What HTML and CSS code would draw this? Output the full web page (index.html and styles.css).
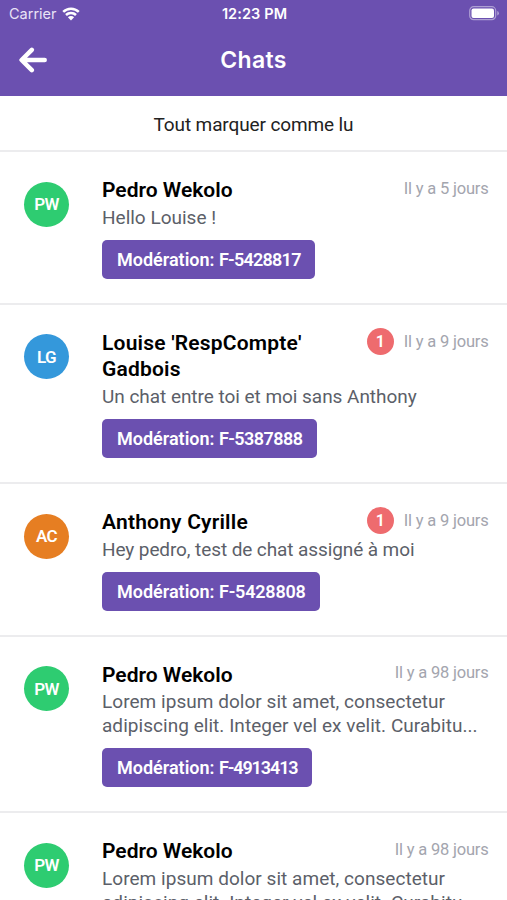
FILE: index.html
```html
<!DOCTYPE html>
<html lang="fr">
<head>
<meta charset="utf-8">
<title>Chats</title>
<link rel="stylesheet" href="styles.css">
</head>
<body>
<header class="header">
  <div class="status">
    <div class="carrier"><span>Carrier</span>
      <svg class="wifi" viewBox="0 0 18 14" width="18" height="14"><path d="M1.2 4.9a11.2 11.2 0 0 1 15.6 0M4 8a7.1 7.1 0 0 1 10 0" fill="none" stroke="#fff" stroke-width="2.5"/><path d="M9 13.4 5.9 10.2a4.4 4.4 0 0 1 6.2 0z" fill="#fff"/></svg>
    </div>
    <span class="clock">12:23 PM</span>
    <svg class="battery" viewBox="0 0 31 15" width="31" height="15"><rect x=".7" y=".7" width="26" height="13" rx="4" fill="none" stroke="#fff" stroke-opacity=".45" stroke-width="1.2"/><rect x="2.5" y="2.5" width="22.5" height="9.5" rx="2" fill="#fff"/><path d="M28.3 5v4.5q1.5-.5 1.5-2.2T28.3 5z" fill="#fff" fill-opacity=".5"/></svg>
  </div>
  <div class="nav">
    <svg class="back" viewBox="0 0 28 26" width="28" height="26"><path d="M12.8 2.8 2.6 13l10.2 10.2M3.2 13h22.5" fill="none" stroke="#fff" stroke-width="4.5" stroke-linecap="round" stroke-linejoin="round"/></svg>
    <h1 class="title">Chats</h1>
  </div>
</header>
<div class="mark-all"><span>Tout marquer comme lu</span></div>
<main class="list">
  <article class="chat">
    <div class="avatar green">PW</div>
    <div class="body">
      <div class="top"><h2 class="name">Pedro Wekolo</h2><div class="meta"><time>Il y a 5 jours</time></div></div>
      <p class="message">Hello Louise !</p>
      <span class="tag t1">Modération: <span class="ref">F-5428817</span></span>
    </div>
  </article>
  <article class="chat">
    <div class="avatar blue">LG</div>
    <div class="body">
      <div class="top"><h2 class="name wide">Louise 'RespCompte' Gadbois</h2><div class="meta unread"><span class="count">1</span><time>Il y a 9 jours</time></div></div>
      <p class="message snug">Un chat entre toi et moi sans Anthony</p>
      <span class="tag t2">Modération: <span class="ref">F-5387888</span></span>
    </div>
  </article>
  <article class="chat">
    <div class="avatar orange">AC</div>
    <div class="body">
      <div class="top"><h2 class="name wide">Anthony Cyrille</h2><div class="meta unread"><span class="count">1</span><time>Il y a 9 jours</time></div></div>
      <p class="message tight">Hey pedro, test de chat assigné à moi</p>
      <span class="tag t3">Modération: <span class="ref">F-5428808</span></span>
    </div>
  </article>
  <article class="chat">
    <div class="avatar green">PW</div>
    <div class="body">
      <div class="top"><h2 class="name">Pedro Wekolo</h2><div class="meta"><time>Il y a 98 jours</time></div></div>
      <p class="message loose">Lorem ipsum dolor sit amet, consectetur<br>adipiscing elit. Integer vel ex velit. Curabitu...</p>
      <span class="tag t4">Modération: <span class="ref">F-4913413</span></span>
    </div>
  </article>
  <article class="chat">
    <div class="avatar green">PW</div>
    <div class="body">
      <div class="top"><h2 class="name">Pedro Wekolo</h2><div class="meta"><time>Il y a 98 jours</time></div></div>
      <p class="message loose">Lorem ipsum dolor sit amet, consectetur<br>adipiscing elit. Integer vel ex velit. Curabitu...</p>
    </div>
  </article>
</main>
</body>
</html>
```
FILE: styles.css
```css
* { box-sizing: border-box; }
html, body { height: 900px; overflow: hidden; }
body { margin: 0; background: #fff; color: #000; font-family: Roboto, "Liberation Sans", sans-serif; }
h1, h2, p { margin: 0; }
svg { display: block; }
.header { height: 96px; background: #6b50b0; color: #fff; font-family: Inter, sans-serif; }
.status { height: 27px; display: grid; grid-template-columns: 1fr auto 1fr; align-items: center; padding: 0 7px 0 9px; }
.carrier { display: flex; align-items: center; gap: 5px; font-size: 14.5px; color: #e9e3f6; }
.clock { font-size: 14.5px; font-weight: 600; letter-spacing: .1px; }
.battery { justify-self: end; }
.nav { height: 66px; display: grid; grid-template-columns: 1fr auto 1fr; align-items: center; padding: 0 19px; }
.title { font-size: 23px; font-weight: 600; letter-spacing: .3px; }
.mark-all { height: 56px; padding-top: 2.5px; border-bottom: 2px solid #ececee; display: flex; align-items: center; justify-content: center; font-size: 19px; color: #222; letter-spacing: -.12px; }
.chat { display: flex; padding: 25px 18.5px 24.1px 24px; border-bottom: 2px solid #ececee; }
.avatar { flex: none; width: 45px; height: 45px; margin: 4.7px 33px 0 0; border-radius: 50%; color: #fff; font-size: 17px; letter-spacing: -.6px; font-weight: 600; display: flex; align-items: center; justify-content: center; }
.green { background: #2ecc71; }
.blue { background: #3498db; }
.orange { background: #e67e22; }
.body { flex: 1; min-width: 0; }
.top { display: flex; justify-content: space-between; align-items: flex-start; }
.name { max-width: 240px; font-size: 21px; line-height: 26.6px; font-weight: 600; }
.wide { letter-spacing: .2px; }
.meta { height: 22px; display: flex; align-items: center; gap: 10px; flex: none; }
.unread { height: 23px; }
time { font-size: 16.5px; color: #a3a5ae; white-space: nowrap; letter-spacing: -.2px; }
.count { width: 27px; height: 27px; border-radius: 50%; background: #ee6b6e; color: #fff; font-size: 16px; font-weight: 600; display: flex; align-items: center; justify-content: center; }
.message { font-size: 19px; line-height: 24px; color: #5c5f69; white-space: nowrap; margin-top: 2.2px; }
.snug { letter-spacing: -.04px; }
.tight { letter-spacing: -.1px; }
.loose { letter-spacing: .04px; }
.tag { display: block; width: 213px; height: 39px; margin-top: 9.8px; border-radius: 5px; background: #6b50b0; color: #fff; font-size: 18px; font-weight: 600; line-height: 40px; padding-left: 15px; white-space: nowrap; }
.t1 .ref { letter-spacing: -.75px; }
.t2 { width: 215px; }
.t2 .ref { letter-spacing: -.55px; }
.t3 { width: 218px; }
.t3 .ref { letter-spacing: -.2px; }
.t4 { width: 210px; }
.t4 .ref { letter-spacing: -1.1px; }
```
